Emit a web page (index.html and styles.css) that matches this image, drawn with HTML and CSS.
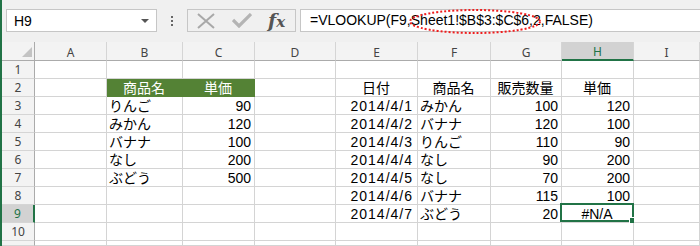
FILE: index.html
```html
<!DOCTYPE html>
<html lang="ja">
<head>
  <meta charset="UTF-8">
  <title>VLOOKUP</title>
  <link rel="stylesheet" href="styles.css">
</head>
<body>
  <!-- 数式バー -->
  <div class="formula-bar">
    <div class="name-box">
      <span>H9</span>
      <span class="dropdown"></span>
    </div>
    <div class="grip"><i></i><i></i><i></i></div>
    <div class="fx-box">
      <svg class="icon-cancel" width="18" height="16" viewBox="0 0 18 16">
        <path d="M1 1 L17 15 M17 1 L1 15" stroke="#a8a8a8" stroke-width="2" fill="none"/>
      </svg>
      <svg class="icon-enter" width="20" height="15" viewBox="0 0 20 15">
        <path d="M1 7 L7 13 L19 1" stroke="#b4b4b4" stroke-width="3.2" fill="none"/>
      </svg>
      <span class="fx">f<small>x</small></span>
    </div>
    <div class="formula">
      =VLOOKUP(F9,Sheet1!$B$3:$C$6,2,FALSE)
      <svg class="mark" width="134" height="25" viewBox="0 0 134 25">
        <ellipse cx="67" cy="12.5" rx="65" ry="11.5" fill="none" stroke="#f01c1c" stroke-width="2" stroke-dasharray="2 2"/>
      </svg>
    </div>
  </div>

  <!-- シート -->
  <div class="sheet" id="sheet"></div>

  <script>
    const letters = ['A', 'B', 'C', 'D', 'E', 'F', 'G', 'H', 'I'];
    const data = [
      [],
      ['', '商品名', '単価', '', '日付', '商品名', '販売数量', '単価', ''],
      ['', 'りんご', '90', '', '2014/4/1', 'みかん', '100', '120'],
      ['', 'みかん', '120', '', '2014/4/2', 'バナナ', '120', '100'],
      ['', 'バナナ', '100', '', '2014/4/3', 'りんご', '110', '90'],
      ['', 'なし', '200', '', '2014/4/4', 'なし', '90', '200'],
      ['', 'ぶどう', '500', '', '2014/4/5', 'なし', '70', '200'],
      ['', '', '', '', '2014/4/6', 'バナナ', '115', '100'],
      ['', '', '', '', '2014/4/7', 'ぶどう', '20', '#N/A'],
      [],
      []
    ];
    const active = { row: 9, col: 'H' };

    function renderSheet() {
      const sheet = document.getElementById('sheet');
      let html = '<div class="corner"></div>';
      letters.forEach(l => {
        html += `<div class="col-head${l === active.col ? ' sel' : ''}">${l}</div>`;
      });
      data.forEach((row, i) => {
        const r = i + 1;
        const label = r <= 10 ? r : '';
        html += `<div class="row-head${r === active.row ? ' sel' : ''}">${label}</div>`;
        letters.forEach((l, j) => {
          const v = row[j] || '';
          let cls = 'cell';
          if (r === 2) cls += ' center';
          else if (v === '#N/A') cls += ' center';
          else if (/^\d+\/\d+\/\d+$/.test(v)) cls += ' num date';
          else if (/^\d+$/.test(v)) cls += ' num';
          if (r === 2 && (l === 'B' || l === 'C')) cls += ' fill';
          const cursor = r === active.row && l === active.col ? '<span class="cursor"><i></i></span>' : '';
          html += `<div class="${cls}">${v}${cursor}</div>`;
        });
      });
      sheet.innerHTML = html;
    }

    renderSheet();
  </script>
</body>
</html>
```

FILE: styles.css
```css
body { margin: 0; width: 700px; height: 246px; overflow: hidden; background: #f0f0f0; border-left: 2px solid #217346; box-sizing: border-box; font-family: "Liberation Sans", "Noto Sans CJK JP", sans-serif; }

/* 数式バー */
.formula-bar { display: flex; align-items: flex-start; height: 42px; padding: 9px 0 0 4px; box-sizing: border-box; }
.name-box { display: flex; align-items: center; justify-content: space-between; width: 151px; height: 23px; box-sizing: border-box; border: 1px solid #c6c6c6; background: #fff; padding: 0 7px 0 7px; font-size: 14px; color: #000; }
.dropdown { width: 0; height: 0; border-left: 4px solid transparent; border-right: 4px solid transparent; border-top: 4px solid #555; }
.grip { width: 30px; height: 23px; display: flex; flex-direction: column; align-items: center; justify-content: center; gap: 2px; }
.grip i { display: block; width: 2px; height: 2px; background: #666; }
.fx-box { display: flex; align-items: center; width: 109px; height: 23px; box-sizing: border-box; border: 1px solid #c6c6c6; background: #f0f0f0; padding-left: 9px; }
.icon-cancel { margin-right: 17px; }
.icon-enter { margin-right: 16px; }
.fx { font-family: "DejaVu Serif", serif; font-style: italic; font-weight: bold; font-size: 19px; color: #555; line-height: 20px; }
.fx small { font-size: 15px; }
.formula { position: relative; flex: 1; height: 23px; margin-left: 4px; box-sizing: border-box; border: 1px solid #c6c6c6; border-right: none; background: #fff; padding-left: 9px; font-size: 14px; line-height: 21px; color: #000; white-space: nowrap; }
.mark { position: absolute; left: 107px; top: -1px; }

/* シート */
.sheet { display: grid; grid-template-columns: 33px 72px 76px 72px 81px 82px 73px 71px 72px 1fr; grid-template-rows: 19px repeat(10, 18px) 5px; overflow: hidden; }
.corner, .col-head, .row-head { background: #f3f3f3; box-sizing: border-box; font-family: "Noto Sans", sans-serif; font-size: 12px; color: #444; }
.corner { position: relative; border-right: 1px solid #ababab; border-bottom: 1px solid #ababab; }
.corner::after { content: ""; position: absolute; right: 2px; bottom: 3px; border-left: 10px solid transparent; border-bottom: 10px solid #c3c3c3; }
.col-head { display: flex; align-items: center; justify-content: center; padding-top: 2px; border-right: 1px solid #d5d5d5; border-bottom: 1px solid #ababab; }
.col-head.sel { background: #d2d2d2; color: #217346; border-bottom: 2px solid #217346; }
.row-head { display: flex; align-items: center; justify-content: center; border-right: 1px solid #ababab; border-bottom: 1px solid #d5d5d5; overflow: hidden; }
.row-head.sel { background: #d2d2d2; color: #217346; border-right: 2px solid #217346; }
.cell { position: relative; background: #fff; box-sizing: border-box; border-right: 1px solid #d4d4d4; border-bottom: 1px solid #d4d4d4; padding: 0 3px 0 2px; font-size: 14px; line-height: 18px; color: #000; white-space: nowrap; }
.cell.num { text-align: right; }
.cell.date { letter-spacing: 1px; padding-right: 4px; }
.cell.center { text-align: center; }
.cell.fill { background: #548235; border-color: #548235; color: #fff; }
.cursor { position: absolute; left: -2px; right: -1px; top: -2px; bottom: 0; border: 2px solid #217346; }
.cursor i { position: absolute; right: -4px; bottom: -4px; width: 5px; height: 5px; background: #217346; border: 1px solid #fff; }
```
